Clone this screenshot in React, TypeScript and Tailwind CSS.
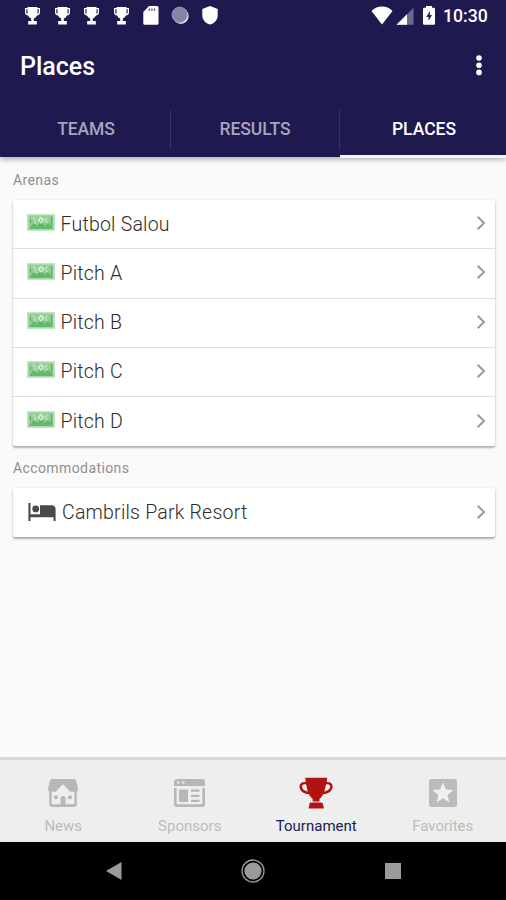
import React from 'react';

const pitches = ['Futbol Salou', 'Pitch A', 'Pitch B', 'Pitch C', 'Pitch D'];

function Trophy({ className }: { className: string }) {
  return (
    <svg viewBox="0 0 34 32" className={className} fill="currentColor" preserveAspectRatio="none">
      <path d="M6.200 .8h22l-.6 4.300C31 4.500 33.600 6.400 33.600 9.400c0 4.300-4.200 7.500-9.400 7.800-1 1.900-2.100 3.400-3.700 4.600v2.600h-6.800v-2.600c-1.600-1.200-2.800-2.700-3.800-4.600C4.600 16.900.5 13.700.5 9.400c0-3 2.700-4.900 6.300-4.300zM7.200 7.600C4.700 6.600 3 7.700 3 9.500c0 2.400 2.500 4.400 5.700 5zM27 7.600l-1.600 6.900c3.200-.6 5.700-2.600 5.700-5 0-1.800-1.700-2.900-4.100-1.900z" fillRule="evenodd" />
      <path d="M12.500 25.500h9.200c1.700 0 2.100.8 2.400 2.200l.8 3.900H9.600l.7-3.900c.3-1.400.5-2.200 2.200-2.200z" />
    </svg>
  );
}

function StatusTrophy() {
  return (
    <svg viewBox="0 0 17 20" className="h-5 w-[17px]" fill="#fff">
      <path d="M3.500 1h10v1H16v4.500c0 1.800-1.500 3-3.300 3.200-.6 1.400-1.500 2.300-2.900 2.700V15h3v3.500H4.200V15h3v-2.600C5.800 12 4.900 11.100 4.300 9.700 2.500 9.500 1 8.300 1 6.500V2h2.500zM2.300 3.300v3c0 .8.400 1.400 1.200 1.700V3.300zM13.500 3.300V8c.8-.3 1.200-.9 1.200-1.700v-3z" fillRule="evenodd" />
    </svg>
  );
}

function StatusBar() {
  return (
    <div className="flex h-8 items-center pl-[18px] pr-[19px]">
      <div className="grid grid-cols-[repeat(7,29.5px)] justify-items-center">
        <StatusTrophy />
        <StatusTrophy />
        <StatusTrophy />
        <StatusTrophy />
        <svg viewBox="0 0 16 20" className="h-5 w-4" fill="#fff">
          <path d="M6 0h8q1.500 0 1.500 1.500V17.200q0 1.500-1.500 1.500H1.800Q.3 18.700 .3 17.200V6z" />
          <path d="M6.300 2.600v2.200M8.900 2.600v2.200M11.500 2.600v2.200" stroke="#4b4872" strokeWidth="1.300" />
        </svg>
        <svg viewBox="0 0 20 20" className="size-5">
          <circle cx="10.800" cy="10" r="7.900" fill="#e8e7f0" />
          <circle cx="9.700" cy="8.800" r="7.600" fill="#8783a5" stroke="#a09db8" strokeWidth="1" />
        </svg>
        <svg viewBox="0 0 18 20" className="h-5 w-[18px]" fill="#fff">
          <path d="M9 0l7.700 3V9.400c0 4-3 7.800-7.700 9.200C4.300 17.200 1.300 13.400 1.300 9.400V3z" />
        </svg>
      </div>
      <div className="ml-auto flex items-center">
        <svg viewBox="0 0 22 20" className="h-5 w-[22px]" fill="#fff">
          <path d="M11 18.400L.5 4.900C3.500 2.100 7 .6 11 .6s7.500 1.500 10.500 4.300z" />
        </svg>
        <svg viewBox="0 0 18 20" className="ml-[3px] h-5 w-[18px]">
          <path d="M17.500 1.700v17H.5z" fill="#6c6990" />
          <path d="M11 8.200v10.500H.5z" fill="#fff" />
        </svg>
        <svg viewBox="0 0 14 20" className="ml-[8px] h-5 w-[14px]" fill="#fff">
          <path d="M4 0h6v1.800h1.600q1.400 0 1.400 1.400V17.400q0 1.400-1.400 1.400H2.400Q1 18.800 1 17.400V3.200q0-1.400 1.400-1.400H4z" />
          <path d="M7.900 5l-3.700 6h2.400v3.900l3.400-5.900H7.900z" fill="#252154" />
        </svg>
        <span className="ml-[7px] w-[44px] whitespace-nowrap text-[17.700px] font-medium leading-5 text-white">10:30</span>
      </div>
    </div>
  );
}

function PitchIcon() {
  return (
    <svg viewBox="0 0 28 17" className="h-[17px] w-[28px]">
      <rect width="28" height="17" fill="#c3e4c5" />
      <rect x="1.500" y="1.500" width="25" height="14" fill="#93cf98" />
      <path d="M2 15l5-7 3 4 4-5 4 5 3-4 5 7z" fill="#61b96b" />
      <path d="M3.500 5.500v4M24.500 3v10" stroke="#5fae68" strokeWidth="1.200" />
      <path d="M14 2.500l3.500 3.500L14 10l-3.500-4z" fill="#d2edd4" />
      <path d="M14 5l1.300 1.300L14 8l-1.300-1.700z" fill="#86c98d" />
      <path d="M6 3l2.500 3.500L7.500 10M20 3.500l-1.500 3L21 9.500" stroke="#d5efd6" strokeWidth="1" fill="none" />
    </svg>
  );
}

function BedIcon() {
  return (
    <svg viewBox="0 0 28 20" className="h-5 w-7" fill="#4a4a4a">
      <path d="M.4 1h2.100v11.300h9.500V3.200h11.500q4.100 0 4.100 4.100V19h-2.100v-3.700h-23V19H.4z" />
      <circle cx="7.700" cy="6.900" r="3.400" />
    </svg>
  );
}

function Chevron() {
  return (
    <svg viewBox="0 0 10 16" className="mb-[2px] ml-auto h-4 w-[10px] shrink-0">
      <path d="M1.700 1.700L8 8l-6.300 6.300" fill="none" stroke="#9a9a9a" strokeWidth="2" />
    </svg>
  );
}

const cardClass = 'ml-[13px] mr-[11px] rounded-[2px] bg-white shadow-[0_2px_2px_rgba(0,0,0,0.28),0_0_3px_rgba(0,0,0,0.10)]';

function NavItem({ label, labelClass, children }: { label: string; labelClass: string; children: React.ReactNode }) {
  return (
    <div className="flex flex-col items-center pt-[16px]">
      <div className="flex h-[34px] items-center justify-center">{children}</div>
      <span className={`mt-[6px] text-[15px] leading-5 ${labelClass}`}>{label}</span>
    </div>
  );
}

export default function App() {
  return (
    <div className="flex h-[900px] w-[506px] flex-col overflow-hidden bg-[#fafafa] font-[Roboto,sans-serif]">
      <header className="relative h-[157px] shrink-0 bg-[#1e1a50] shadow-[0_2px_6px_rgba(0,0,0,0.35)]">
        <StatusBar />
        <div className="flex h-[68px] items-center pl-5 pr-[23px] text-white">
          <h1 className="pt-[1px] text-[25px] font-medium">Places</h1>
          <svg viewBox="0 0 8 22" className="mb-[3px] ml-auto h-[22px] w-2" fill="#fff">
            <circle cx="4" cy="4" r="2.800" />
            <circle cx="4" cy="11.200" r="2.800" />
            <circle cx="4" cy="18.400" r="2.800" />
          </svg>
        </div>
        <nav className="grid h-[58px] grid-cols-[171px_169px_166px] text-[17.500px] font-medium text-[#a7a4bd]">
          <div className="flex items-center">
            <span className="flex-1 pl-[2px] text-center tracking-[-0.100px]">TEAMS</span>
            <i className="h-[39px] w-px bg-[#35316a]" />
          </div>
          <div className="flex items-center">
            <span className="flex-1 text-center tracking-[-0.050px]">RESULTS</span>
            <i className="h-[39px] w-px bg-[#35316a]" />
          </div>
          <div className="flex items-center justify-center border-b-[3px] border-[#f5f5f7] pt-[3px] text-white">
            <span className="pl-[2px]">PLACES</span>
          </div>
        </nav>
      </header>
      <main className="flex-1">
        <h2 className="h-[43px] pl-[13px] pt-[13px] text-[14px] leading-5 tracking-[0.400px] text-[#8f8f8f]">Arenas</h2>
        <section className={cardClass}>
          {pitches.map((name) => (
            <div key={name} className="flex h-[49.250px] items-center border-b border-[#dedede] pl-[14px] pr-[9px] last:border-b-0">
              <div className="pb-[4px]"><PitchIcon /></div>
              <span className="ml-[5.500px] text-[19.500px] font-light tracking-[0.220px] text-[#2c2c2c]">{name}</span>
              <Chevron />
            </div>
          ))}
        </section>
        <h2 className="h-[42px] pl-[13px] pt-[12px] text-[14px] leading-5 tracking-[0.400px] text-[#8f8f8f]">Accommodations</h2>
        <section className={cardClass}>
          <div className="flex h-[49px] items-center pl-[15px] pr-[9px]">
            <div className="pb-[2px]"><BedIcon /></div>
            <span className="ml-[6px] text-[19.500px] font-light tracking-[0.220px] text-[#2c2c2c]">Cambrils Park Resort</span>
            <Chevron />
          </div>
        </section>
      </main>
      <nav className="grid h-[84.500px] shrink-0 grid-cols-4 border-t-[3px] border-[#d9d9d9] bg-[#eee]">
        <NavItem label="News" labelClass="text-[#b9bdbb]">
          <svg viewBox="0 0 30 28" className="h-7 w-[30px]" fill="#b4b8b6">
            <path d="M4 0h22q1.700 0 2.100 1.500L30 10q.2 2.500-2 2.700h-5.500L15 5.200l-7.500 7.500H2Q-.2 12.500 0 10l1.900-8.500Q2.300 0 4 0z" />
            <path d="M1.200 12h2.400v13.200h22.800V12h2.400v13q0 3-3 3H4.200q-3 0-3-3z" />
            <path d="M12.500 19.500q0-2.500 2.500-2.500t2.500 2.500V26h-5zM6.200 16.500h3.600v3.600H6.200zM20.200 16.500h3.600v3.600h-3.600z" />
          </svg>
        </NavItem>
        <NavItem label="Sponsors" labelClass="text-[#b9bdbb]">
          <svg viewBox="0 0 31 28" className="h-7 w-[31px]" fill="#b4b8b6">
            <path d="M3 0h25q3 0 3 3v4H0V3q0-3 3-3zM3 2.500v2h2.500v-2zM8 2.500v2h2.500v-2z" fillRule="evenodd" />
            <path d="M0 9h2.600v15.500q0 .8.800.8h24.200q.8 0 .8-.8V9H31v16q0 3-3 3H3q-3 0-3-3zM5 10.500h9v12.500H5zM17 10.500h8.500v2.200H17zM17 15.700h8.500v2.200H17zM17 20.800h8.500V23H17z" />
          </svg>
        </NavItem>
        <NavItem label="Tournament" labelClass="text-[#211b58]">
          <Trophy className="h-8 w-[34px] text-[#b01412]" />
        </NavItem>
        <NavItem label="Favorites" labelClass="text-[#b9bdbb]">
          <svg viewBox="0 0 28 28" className="size-7">
            <rect width="28" height="28" rx="2.500" fill="#b8bcba" />
            <path d="M14 3.200l2.900 7.300 7.600.5-5.900 4.900 1.900 7.500-6.500-4.200-6.500 4.200 1.900-7.500L3.500 11l7.600-.5z" fill="#f0f0f0" />
          </svg>
        </NavItem>
      </nav>
      <footer className="grid h-[58.500px] shrink-0 grid-cols-[113.500px_139.500px_140px] items-center bg-black">
        <svg viewBox="0 0 16 18" className="h-[18px] w-4 translate-x-1/2 justify-self-end">
          <path d="M0 9L15.500 0v18z" fill="#9b9b9b" />
        </svg>
        <svg viewBox="0 0 24 24" className="size-6 translate-x-1/2 justify-self-end">
          <circle cx="12" cy="12" r="11" fill="none" stroke="#999" strokeWidth="1.300" />
          <circle cx="12" cy="12" r="8.600" fill="#9b9b9b" />
        </svg>
        <i className="size-4 translate-x-1/2 justify-self-end bg-[#9b9b9b]" />
      </footer>
    </div>
  );
}
